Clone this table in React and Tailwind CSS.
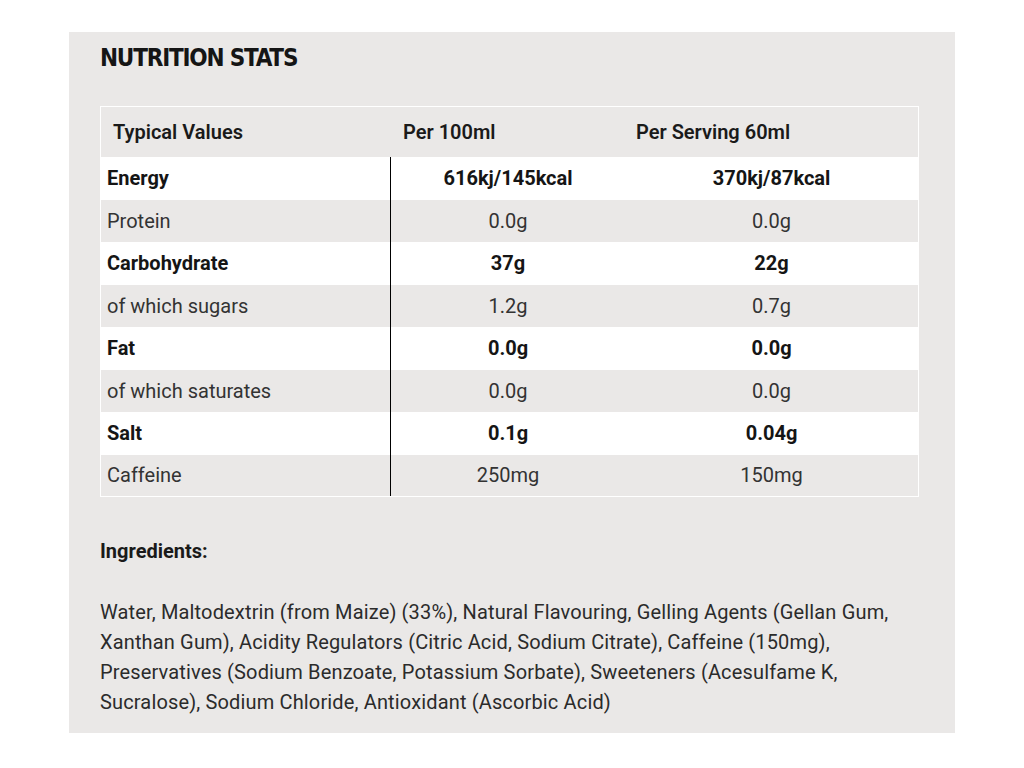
const rows = [
  { name: "Energy", a: "616kj/145kcal", b: "370kj/87kcal", bold: true },
  { name: "Protein", a: "0.0g", b: "0.0g" },
  { name: "Carbohydrate", a: "37g", b: "22g", bold: true },
  { name: "of which sugars", a: "1.2g", b: "0.7g" },
  { name: "Fat", a: "0.0g", b: "0.0g", bold: true },
  { name: "of which saturates", a: "0.0g", b: "0.0g" },
  { name: "Salt", a: "0.1g", b: "0.04g", bold: true },
  { name: "Caffeine", a: "250mg", b: "150mg" },
];

export default function App() {
  return (
    <div className="min-h-screen bg-white pt-[32px] pl-[69px] font-['Roboto',sans-serif]">
      <div className="w-[886px] h-[701px] bg-[#eae8e7] px-[31px] pt-[11px]">
        <h2 className="text-[24px] leading-[30px] font-bold text-[#151515] font-['DejaVu_Sans_Condensed','DejaVu_Sans',sans-serif] tracking-[-1.2px]">
          NUTRITION STATS
        </h2>

        <div className="mt-[33px] w-[819px] border border-white border-b-0">
          <div className="flex h-[50px] items-center text-[20px] font-semibold text-[#1a1a1a]">
            <div className="w-[289px] pl-[12px]">Typical Values</div>
            <div className="w-[234px] pl-[13px]">Per 100ml</div>
            <div className="flex-1 pl-[12px]">Per Serving 60ml</div>
          </div>
          {rows.map((r, i) => (
            <div
              key={r.name}
              className={
                "flex h-[42.5px] items-center text-[20px] " +
                (r.bold
                  ? "bg-white font-bold text-[#151515]"
                  : "bg-[#eae8e7] text-[#333333]") +
                (i === rows.length - 1 ? " border-b border-white" : "")
              }
            >
              <div className="w-[290px] h-full flex items-center pl-[6px] border-r border-black">
                {r.name}
              </div>
              <div className="w-[234px] text-center">{r.a}</div>
              <div className="flex-1 text-center">{r.b}</div>
            </div>
          ))}
        </div>

        <p className="mt-[39px] text-[20px] leading-[30px] font-bold text-[#1a1a1a]">
          Ingredients:
        </p>
        <p className="mt-[31px] text-[20px] leading-[30px] tracking-[0.15px] text-[#2b2b2b]">
          Water, Maltodextrin (from Maize) (33%), Natural Flavouring, Gelling
          Agents (Gellan Gum, Xanthan Gum), Acidity Regulators (Citric Acid,
          Sodium Citrate), Caffeine (150mg), Preservatives (Sodium Benzoate,
          Potassium Sorbate), Sweeteners (Acesulfame K, Sucralose), Sodium
          Chloride, Antioxidant (Ascorbic Acid)
        </p>
      </div>
    </div>
  );
}
